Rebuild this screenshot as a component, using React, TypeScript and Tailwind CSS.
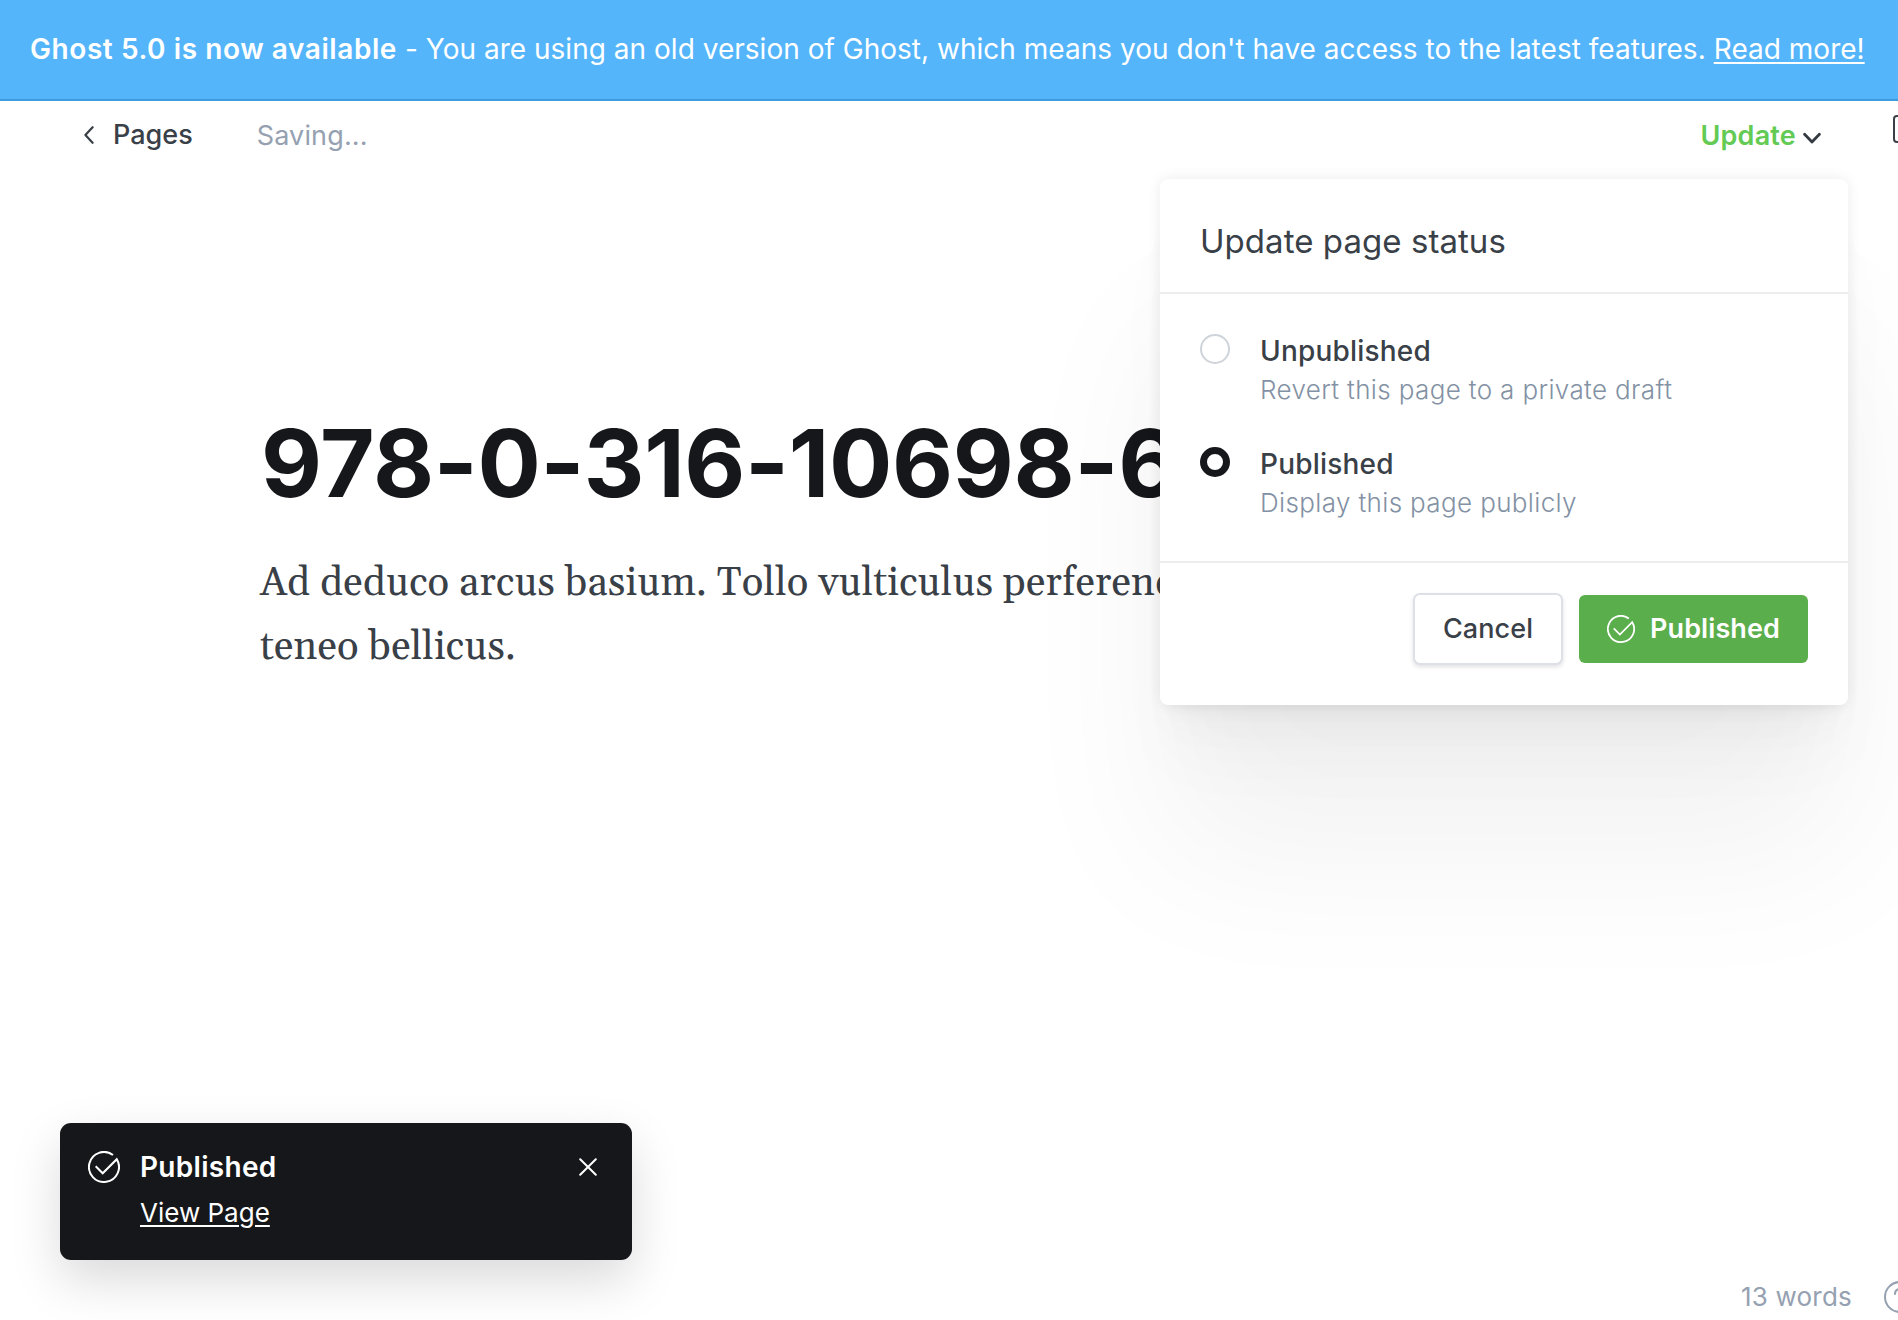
function CheckCircle({ className }: { className: string }) {
  return (
    <svg viewBox="0 0 32 32" fill="none" stroke="currentColor" strokeWidth="2" className={className}>
      <path d="M7.7 15.3 14.7 22.3 28.8 8.2A15 15 0 1 1 25 4" />
    </svg>
  );
}

function Banner() {
  return (
    <div className="flex h-[101px] items-center border-b-2 border-[#3f9ade] bg-[#54b5fb] pb-px pl-[30px] text-[28px] leading-[40px] whitespace-nowrap text-white">
      <p className="font-normal">
        <strong className="mr-[8px] font-semibold tracking-[0.57px]">Ghost 5.0 is now available</strong>
        <span className="tracking-[0.02px]">
          - You are using an old version of Ghost, which means you don't have access to the latest features.
        </span>
        <a href="#" className="ml-[8px] tracking-[0.02px] underline decoration-2 underline-offset-[3px]">
          Read more!
        </a>
      </p>
    </div>
  );
}

function EditorHeader() {
  return (
    <header className="flex h-[67px] items-center overflow-hidden whitespace-nowrap">
      <a href="#" className="ml-[84px] flex shrink-0 items-center text-[27px] leading-[40px] font-medium text-[#394047]">
        <svg viewBox="0 0 10 18" fill="none" stroke="currentColor" strokeWidth="2.2" strokeLinecap="round" strokeLinejoin="round" className="mr-[19px] h-[18px] w-[10px]">
          <path d="M8.6 1.2 1.4 9l7.2 7.8" />
        </svg>
        Pages
      </a>
      <span className="ml-[64px] pt-0.5 text-[27px] leading-[40px] font-normal tracking-[0.15px] text-[#95a1b1]">Saving...</span>
      <button className="mr-[72px] ml-auto flex shrink-0 items-center pt-0.5 text-[27px] leading-[40px] font-semibold tracking-[0.2px] text-[#63ca54]">
        Update
        <svg viewBox="0 0 18 12" fill="none" stroke="#343a42" strokeWidth="2.8" strokeLinecap="round" strokeLinejoin="round" className="mt-1 ml-[7px] h-[12px] w-[18px]">
          <path d="M1.6 2.2 9 10l7.4-7.8" />
        </svg>
      </button>
      <span className="-mr-[27px] mb-[12px] h-[28px] w-[32px] shrink-0 rounded-[4px] border-2 border-[#394047]" />
    </header>
  );
}

function Option({ title, text, selected }: { title: string; text: string; selected?: boolean }) {
  return (
    <label className="flex">
      <span
        className={
          selected
            ? "size-[30px] rounded-full border-[7.5px] border-[#15171a] bg-white"
            : "size-[30px] rounded-full border-2 border-[#ced4d9] bg-white"
        }
      />
      <span className="ml-[30px] block">
        <span className="block pt-[1px] text-[28px] leading-[32px] font-medium tracking-[0.2px] text-[#394047]">{title}</span>
        <span className="mt-[4px] block text-[26px] leading-[38px] font-light tracking-[0.36px] text-[#8391a4]">{text}</span>
      </span>
    </label>
  );
}

function StatusMenu() {
  return (
    <section className="absolute top-[179px] left-[1160px] h-[526px] w-[688px] rounded-[8px] bg-white shadow-[0_0_14px_rgba(0,0,0,0.08),0_4px_4px_-10px_rgba(0,0,0,0.011),0_10px_11px_-10px_rgba(0,0,0,0.016),0_19px_20px_-10px_rgba(0,0,0,0.02),0_34px_36px_-10px_rgba(0,0,0,0.024),0_64px_67px_-10px_rgba(0,0,0,0.029),0_152px_160px_0_rgba(0,0,0,0.05)]">
      <h2 className="h-[115px] border-b-2 border-[#ededee] pt-[38px] pl-[40px] text-[33px] leading-[48px] font-normal tracking-[0.05px] text-[#394047]">
        Update page status
      </h2>
      <div className="flex h-[269px] flex-col gap-[38px] border-b-2 border-[#ededee] pt-[40px] pl-[40px]">
        <Option title="Unpublished" text="Revert this page to a private draft" />
        <Option title="Published" text="Display this page publicly" selected />
      </div>
      <footer className="flex items-center justify-end gap-[16px] pt-[30px] pr-[40px] text-[27px] leading-[40px]">
        <button className="h-[72px] w-[150px] rounded-[7px] border-2 border-[#dde1e7] bg-white font-medium tracking-[0.1px] text-[#394047] shadow-[0_2px_4px_rgba(0,0,0,0.12)]">
          Cancel
        </button>
        <button className="flex h-[68px] w-[229px] items-center rounded-[6px] bg-[#5aae4b] pl-[28px] font-semibold tracking-[0.1px] text-white">
          <CheckCircle className="mr-[15px] size-[28px]" />
          Published
        </button>
      </footer>
    </section>
  );
}

function Toast() {
  return (
    <aside className="absolute top-[1123px] left-[60px] flex h-[137px] w-[572px] rounded-[11px] bg-[#15171a] pt-[24px] pl-[28px] text-white shadow-[0_20px_50px_rgba(10,0,10,0.15)]">
      <CheckCircle className="mt-[4px] size-[32px]" />
      <div className="ml-[20px]">
        <p className="text-[28px] leading-[40px] font-semibold tracking-[0.3px]">Published</p>
        <a href="#" className="mt-[7px] block text-[26px] leading-[38px] font-normal underline decoration-2 underline-offset-[3px]">
          View Page
        </a>
      </div>
      <svg viewBox="0 0 18 18" fill="none" stroke="currentColor" strokeWidth="2" strokeLinecap="round" className="mt-[11px] mr-[35px] ml-auto size-[18px]">
        <path d="m1.2 1.2 15.6 15.6M16.8 1.2 1.2 16.8" />
      </svg>
    </aside>
  );
}

function StatusBar() {
  return (
    <div className="absolute right-0 bottom-0 flex h-[46px] w-[157px] items-center overflow-hidden text-[#95a1b1]">
      <span className="shrink-0 text-[26px] leading-[38px] tracking-[0.2px] whitespace-nowrap">13 words</span>
      <svg viewBox="0 0 32 32" fill="none" stroke="currentColor" strokeWidth="2" strokeLinecap="round" className="ml-[32px] size-[32px] shrink-0">
        <circle cx="16" cy="16" r="15" />
        <path d="M11 13a5 5 0 1 1 7 4.6c-1.3.6-2 1.5-2 2.9" />
        <circle cx="16" cy="24" r="0.6" />
      </svg>
    </div>
  );
}

export default function App() {
  return (
    <div className="relative h-[1320px] w-full overflow-hidden bg-white font-['Inter',sans-serif]">
      <Banner />
      <EditorHeader />
      <main className="ml-[260px] w-[1400px] pt-[239px]">
        <h1 className="ml-px text-[94px] leading-[112px] font-bold tracking-[-0.3px] whitespace-nowrap text-[#15171a]">
          978-0-316-10698-6
        </h1>
        <p className="mt-[33px] font-['Gelasio','Georgia','Liberation_Serif',serif] text-[40px] leading-[64px] tracking-[0.2px] whitespace-nowrap text-[#394047]">
          Ad deduco arcus basium. Tollo vulticulus perferendis
          <br />
          teneo bellicus.
        </p>
      </main>
      <StatusMenu />
      <Toast />
      <StatusBar />
    </div>
  );
}
